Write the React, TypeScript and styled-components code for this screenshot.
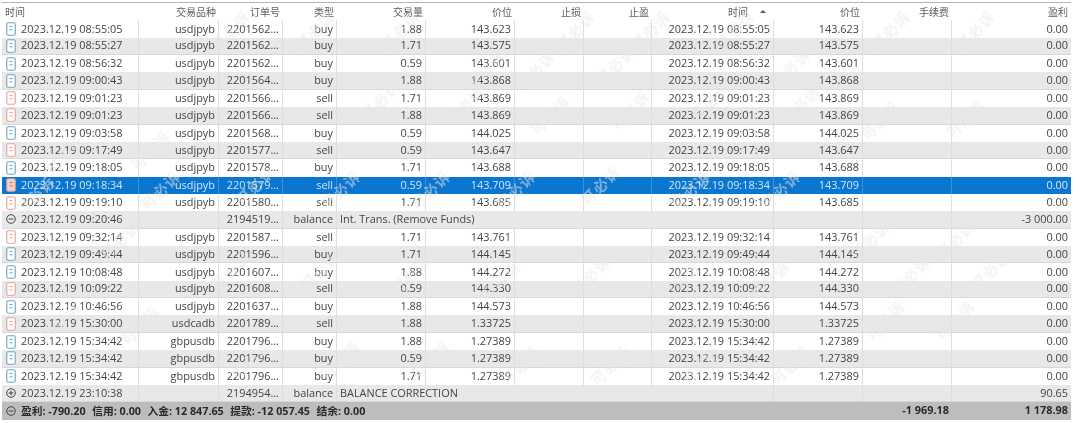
import React from "react";
import styled, { createGlobalStyle } from "styled-components";

const COLUMNS = "137px 80px 64px 54px 89px 89px 69px 68px 122px 89px 89px 119px";
const ROW = 17.36;

const Global = createGlobalStyle`
  html, body { margin: 0; padding: 0; background: #fff; }
  #root { width: 1080px; height: 423px; overflow: hidden; }
`;

const Page = styled.div`
  position: relative;
  width: 1080px;
  height: 423px;
  padding: 2px 9px 0 2px;
  box-sizing: border-box;
  overflow: hidden;
  background: #fff;
  font-family: "Open Sans", "Noto Sans CJK SC", sans-serif;
  font-size: 10.9px;
  color: #444;
  filter: blur(0.4px);
`;

const Table = styled.div`
  border-top: 1px solid #b4b4b4;
`;

const Line = styled.div<{ $tone: "white" | "grey" | "selected" | "head" | "total" }>`
  display: grid;
  grid-template-columns: ${COLUMNS};
  height: ${ROW}px;
  box-sizing: border-box;
  background: ${(p) =>
    ({ white: "#fff", grey: "#e8e8e8", selected: "#0a76cf", head: "#fff", total: "#bdbdbd" })[p.$tone]};
  color: ${(p) => (p.$tone === "selected" ? "#d4e6f6" : p.$tone === "total" ? "#2a2a2a" : p.$tone === "head" ? "#5c5c5c" : "#444")};
  font-weight: ${(p) => (p.$tone === "total" ? 700 : 400)};
  border-bottom: ${(p) => (p.$tone === "grey" ? "1px solid #d8d8d8" : "0")};
`;

const Cell = styled.div<{ $left?: boolean; $span?: number; $bare?: boolean; $line?: string }>`
  grid-column: span ${(p) => p.$span ?? 1};
  display: flex;
  align-items: center;
  justify-content: ${(p) => (p.$left ? "flex-start" : "flex-end")};
  gap: 5px;
  min-width: 0;
  padding: 0 ${(p) => (p.$left ? "0" : "3px")} 0 ${(p) => (p.$left ? "3px" : "0")};
  box-sizing: border-box;
  border-right: ${(p) => (p.$bare ? "0" : `1px solid ${p.$line ?? "#dedede"}`)};
  white-space: nowrap;
  line-height: 1;
`;

const HeadCell = styled(Cell)`
  font-size: 10px;
  gap: 0;
  border-right: 0;
`;

const StartCell = styled(Cell)`
  padding-left: 4px;
`;

const Stamp = styled.span`
  display: inline-block;
`;

const SortMark = styled.span`
  width: 0;
  height: 0;
  margin: 0 5px 0 12px;
  border-left: 3px solid transparent;
  border-right: 3px solid transparent;
  border-bottom: 3px solid #555;
`;

const SummaryText = styled.span`
  font-size: 10.75px;
`;

const Summary = styled.span`
  margin-right: 6.5px;
`;

const Overflowing = styled.span`
  overflow: visible;
`;

const Watermarks = styled.div`
  position: absolute;
  inset: 0;
  pointer-events: none;
`;

const Mark = styled.span`
  position: absolute;
  transform: translate(-50%, -50%) rotate(-45deg);
  font-size: 15px;
  font-weight: 700;
  letter-spacing: 1px;
  white-space: nowrap;
  color: rgba(255, 255, 255, 0.42);
  text-shadow: 0 0 1px rgba(120, 120, 120, 0.14);
`;

function DocIcon({ kind }: { kind: "buy" | "sell" | "sellActive" }) {
  const stroke = kind === "buy" ? "#6ea6bd" : "#e5a297";
  const fill = kind === "sellActive" ? "#f3d2cc" : "#fff";
  const dash = kind === "sellActive" ? "#c96f60" : stroke;
  return (
    <svg width="10" height="14" viewBox="0 0 10 14" style={{ flex: "none" }}>
      <rect x="0.75" y="0.75" width="8.5" height="12.5" rx="1.6" fill={fill} stroke={stroke} strokeWidth="1.1" />
      <path d="M3.4 4.6h3.2M3.4 7.8h3.2" stroke={dash} strokeWidth="1" />
    </svg>
  );
}

function CircleIcon({ plus }: { plus?: boolean }) {
  return (
    <svg width="10" height="10" viewBox="0 0 10 10" style={{ flex: "none" }}>
      <circle cx="5" cy="5" r="4.3" fill="none" stroke="#444" strokeWidth="1" />
      <path d={plus ? "M2.6 5h4.8M5 2.6v4.8" : "M2.6 5h4.8"} stroke="#444" strokeWidth="1" />
    </svg>
  );
}

type Trade = [string, string, string, "buy" | "sell", string, string, string, string];

const trades: (Trade | null)[] = [
  ["2023.12.19 08:55:05", "usdjpyb", "2201562...", "buy", "1.88", "143.623", "2023.12.19 08:55:05", "143.623"],
  ["2023.12.19 08:55:27", "usdjpyb", "2201562...", "buy", "1.71", "143.575", "2023.12.19 08:55:27", "143.575"],
  ["2023.12.19 08:56:32", "usdjpyb", "2201562...", "buy", "0.59", "143.601", "2023.12.19 08:56:32", "143.601"],
  ["2023.12.19 09:00:43", "usdjpyb", "2201564...", "buy", "1.88", "143.868", "2023.12.19 09:00:43", "143.868"],
  ["2023.12.19 09:01:23", "usdjpyb", "2201566...", "sell", "1.71", "143.869", "2023.12.19 09:01:23", "143.869"],
  ["2023.12.19 09:01:23", "usdjpyb", "2201566...", "sell", "1.88", "143.869", "2023.12.19 09:01:23", "143.869"],
  ["2023.12.19 09:03:58", "usdjpyb", "2201568...", "buy", "0.59", "144.025", "2023.12.19 09:03:58", "144.025"],
  ["2023.12.19 09:17:49", "usdjpyb", "2201577...", "sell", "0.59", "143.647", "2023.12.19 09:17:49", "143.647"],
  ["2023.12.19 09:18:05", "usdjpyb", "2201578...", "buy", "1.71", "143.688", "2023.12.19 09:18:05", "143.688"],
  ["2023.12.19 09:18:34", "usdjpyb", "2201579...", "sell", "0.59", "143.709", "2023.12.19 09:18:34", "143.709"],
  ["2023.12.19 09:19:10", "usdjpyb", "2201580...", "sell", "1.71", "143.685", "2023.12.19 09:19:10", "143.685"],
  null,
  ["2023.12.19 09:32:14", "usdjpyb", "2201587...", "sell", "1.71", "143.761", "2023.12.19 09:32:14", "143.761"],
  ["2023.12.19 09:49:44", "usdjpyb", "2201596...", "buy", "1.71", "144.145", "2023.12.19 09:49:44", "144.145"],
  ["2023.12.19 10:08:48", "usdjpyb", "2201607...", "buy", "1.88", "144.272", "2023.12.19 10:08:48", "144.272"],
  ["2023.12.19 10:09:22", "usdjpyb", "2201608...", "sell", "0.59", "144.330", "2023.12.19 10:09:22", "144.330"],
  ["2023.12.19 10:46:56", "usdjpyb", "2201637...", "buy", "1.88", "144.573", "2023.12.19 10:46:56", "144.573"],
  ["2023.12.19 15:30:00", "usdcadb", "2201789...", "sell", "1.88", "1.33725", "2023.12.19 15:30:00", "1.33725"],
  ["2023.12.19 15:34:42", "gbpusdb", "2201796...", "buy", "1.88", "1.27389", "2023.12.19 15:34:42", "1.27389"],
  ["2023.12.19 15:34:42", "gbpusdb", "2201796...", "buy", "0.59", "1.27389", "2023.12.19 15:34:42", "1.27389"],
  ["2023.12.19 15:34:42", "gbpusdb", "2201796...", "buy", "1.71", "1.27389", "2023.12.19 15:34:42", "1.27389"],
];

const marks: [number, number][] = [
  [65, 155], [150, 150], [230, 30], [315, 30], [400, 30], [485, 70], [575, 30], [650, 30],
  [535, 70], [615, 65], [735, 30], [790, 68], [890, 30], [975, 30], [380, 100], [465, 105],
  [550, 115], [630, 110], [710, 100], [800, 105], [880, 120], [965, 118],
  [35, 195], [120, 240], [160, 190], [255, 185], [340, 190], [430, 190], [515, 190], [600, 185],
  [690, 190], [780, 190], [870, 240], [955, 240], [910, 275], [990, 270], [885, 320], [955, 320],
  [60, 320], [140, 325], [230, 270], [320, 270], [410, 275], [500, 280], [590, 275], [680, 280],
  [770, 280], [250, 360], [340, 360], [430, 360], [520, 365], [610, 365], [700, 365], [790, 365],
];

function balanceRow(time: string, order: string, comment: string, profit: string, plus: boolean) {
  return (
    <Line $tone="grey">
      <StartCell $left>
        <CircleIcon plus={plus} />
        <Stamp>{time}</Stamp>
      </StartCell>
      <Cell />
      <Cell>{order}</Cell>
      <Cell>balance</Cell>
      <Cell $left $span={4} $bare>
        <Overflowing>{comment}</Overflowing>
      </Cell>
      <Cell />
      <Cell />
      <Cell />
      <Cell $bare>{profit}</Cell>
    </Line>
  );
}

export default function App() {
  return (
    <Page>
      <Global />
      <Table>
        <Line $tone="head">
          <HeadCell $left>
            <Stamp>时间</Stamp>
          </HeadCell>
          <HeadCell>交易品种</HeadCell>
          <HeadCell>订单号</HeadCell>
          <HeadCell>类型</HeadCell>
          <HeadCell>交易量</HeadCell>
          <HeadCell>价位</HeadCell>
          <HeadCell>止损</HeadCell>
          <HeadCell>止盈</HeadCell>
          <HeadCell>
            时间
            <SortMark />
          </HeadCell>
          <HeadCell>价位</HeadCell>
          <HeadCell>手续费</HeadCell>
          <HeadCell>盈利</HeadCell>
        </Line>
        {trades.map((t, i) => {
          if (!t) return <React.Fragment key={i}>{balanceRow("2023.12.19 09:20:46", "2194519...", "Int. Trans. (Remove Funds)", "-3 000.00", false)}</React.Fragment>;
          const selected = i === 9;
          const tone = selected ? "selected" : i % 2 === 1 ? "grey" : "white";
          const line = selected ? "#3c90d8" : undefined;
          return (
            <Line key={i} $tone={tone}>
              <StartCell $left $line={line}>
                <DocIcon kind={selected ? "sellActive" : t[3]} />
                <Stamp>{t[0]}</Stamp>
              </StartCell>
              <Cell $line={line}>{t[1]}</Cell>
              <Cell $line={line}>{t[2]}</Cell>
              <Cell $line={line}>{t[3]}</Cell>
              <Cell $line={line}>{t[4]}</Cell>
              <Cell $line={line}>{t[5]}</Cell>
              <Cell $line={line} />
              <Cell $line={line} />
              <Cell $line={line}>{t[6]}</Cell>
              <Cell $line={line}>{t[7]}</Cell>
              <Cell $line={line} />
              <Cell $bare>0.00</Cell>
            </Line>
          );
        })}
        {balanceRow("2023.12.19 23:10:38", "2194954...", "BALANCE CORRECTION", "90.65", true)}
        <Line $tone="total">
          <StartCell $left $span={10} $bare>
            <CircleIcon />
            <SummaryText>
              <Summary>盈利: -790.20</Summary>
              <Summary>信用: 0.00</Summary>
              <Summary>入金: 12 847.65</Summary>
              <Summary>提款: -12 057.45</Summary>
              <span>结余: 0.00</span>
            </SummaryText>
          </StartCell>
          <Cell $bare>-1 969.18</Cell>
          <Cell $bare>1 178.98</Cell>
        </Line>
      </Table>
      <Watermarks>
        {marks.map(([x, y], i) => (
          <Mark key={i} style={{ left: x, top: y }}>
            可必诉
          </Mark>
        ))}
      </Watermarks>
    </Page>
  );
}
